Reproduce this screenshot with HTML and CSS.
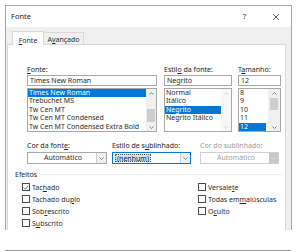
FILE: index.html
```html
<!DOCTYPE html>
<html>
<head>
    <meta charset="UTF-8">
    <title>Fonte</title>
    <link rel="stylesheet" href="styles.css">
</head>
<body>
    <div class="dialog">
        <div class="titlebar">
            <span class="title">Fonte</span>
            <span class="help">?</span>
            <svg class="close" width="8" height="8" viewBox="0 0 8 8"><path d="M1 1L7 7M7 1L1 7" stroke="#333" stroke-width="0.8"/></svg>
        </div>
        <div class="tabs">
            <div class="tab active"><u>F</u>onte</div>
            <div class="tab">A<u>v</u>ançado</div>
        </div>
        <div class="panel">
            <div class="pickers">
                <div class="picker name">
                    <div class="label"><u>F</u>onte:</div>
                    <div class="input">Times New Roman</div>
                    <div class="listbox">
                        <ul class="items">
                            <li class="selected">Times New Roman</li>
                            <li>Trebuchet MS</li>
                            <li>Tw Cen MT</li>
                            <li>Tw Cen MT Condensed</li>
                            <li>Tw Cen MT Condensed Extra Bold</li>
                        </ul>
                        <div class="scrollbar">
                            <svg width="5" height="3" viewBox="0 0 5 3"><path d="M0.5 2.5L2.5 0.5L4.5 2.5" fill="none" stroke="#555" stroke-width="0.7"/></svg>
                            <div class="thumb thumb-name"></div>
                            <svg width="5" height="3" viewBox="0 0 5 3"><path d="M0.5 0.5L2.5 2.5L4.5 0.5" fill="none" stroke="#555" stroke-width="0.7"/></svg>
                        </div>
                    </div>
                </div>
                <div class="picker style">
                    <div class="label">Estil<u>o</u> da fonte:</div>
                    <div class="input">Negrito</div>
                    <div class="listbox">
                        <ul class="items">
                            <li>Normal</li>
                            <li>Itálico</li>
                            <li class="selected">Negrito</li>
                            <li>Negrito Itálico</li>
                        </ul>
                        <div class="scrollbar off">
                            <svg width="5" height="3" viewBox="0 0 5 3"><path d="M0.5 2.5L2.5 0.5L4.5 2.5" fill="none" stroke="#c8c8c8" stroke-width="0.7"/></svg>
                            <svg width="5" height="3" viewBox="0 0 5 3"><path d="M0.5 0.5L2.5 2.5L4.5 0.5" fill="none" stroke="#c8c8c8" stroke-width="0.7"/></svg>
                        </div>
                    </div>
                </div>
                <div class="picker size">
                    <div class="label">T<u>a</u>manho:</div>
                    <div class="input">12</div>
                    <div class="listbox">
                        <ul class="items">
                            <li>8</li>
                            <li>9</li>
                            <li>10</li>
                            <li>11</li>
                            <li class="selected">12</li>
                        </ul>
                        <div class="scrollbar">
                            <svg width="5" height="3" viewBox="0 0 5 3"><path d="M0.5 2.5L2.5 0.5L4.5 2.5" fill="none" stroke="#555" stroke-width="0.7"/></svg>
                            <div class="thumb thumb-size"></div>
                            <svg width="5" height="3" viewBox="0 0 5 3"><path d="M0.5 0.5L2.5 2.5L4.5 0.5" fill="none" stroke="#555" stroke-width="0.7"/></svg>
                        </div>
                    </div>
                </div>
            </div>
            <div class="combos">
                <div class="combo-field color">
                    <div class="label">Cor da font<u>e</u>:</div>
                    <div class="combo">
                        <span class="value center">Automático</span>
                        <span class="arrow"><svg width="5" height="3" viewBox="0 0 5 3"><path d="M0.5 0.5L2.5 2.5L4.5 0.5" fill="none" stroke="#555" stroke-width="0.7"/></svg></span>
                    </div>
                </div>
                <div class="combo-field underline">
                    <div class="label">Estilo de s<u>u</u>blinhado:</div>
                    <div class="combo focus">
                        <span class="value"><span class="picked">(nenhum)</span></span>
                        <span class="arrow"><svg width="5" height="3" viewBox="0 0 5 3"><path d="M0.5 0.5L2.5 2.5L4.5 0.5" fill="none" stroke="#555" stroke-width="0.7"/></svg></span>
                    </div>
                </div>
                <div class="combo-field undercolor">
                    <div class="label off">Cor do sublinhado:</div>
                    <div class="combo off">
                        <span class="value center">Automático</span>
                        <span class="arrow"><svg width="5" height="3" viewBox="0 0 5 3"><path d="M0.5 0.5L2.5 2.5L4.5 0.5" fill="none" stroke="#e8e8e8" stroke-width="0.7"/></svg></span>
                    </div>
                </div>
            </div>
            <div class="group">
                <span>Efeitos</span>
                <span class="rule"></span>
            </div>
            <div class="effects">
                <ul class="checks first">
                    <li><span class="box checked"><svg width="7" height="7" viewBox="0 0 7 7"><path d="M1 3.6L2.8 5.4L6 1.5" fill="none" stroke="#333" stroke-width="0.8"/></svg></span>Tac<u>h</u>ado</li>
                    <li><span class="box"></span>Tachado du<u>p</u>lo</li>
                    <li><span class="box"></span>Sob<u>r</u>escrito</li>
                    <li><span class="box"></span>S<u>u</u>bscrito</li>
                </ul>
                <ul class="checks">
                    <li><span class="box"></span>Versale<u>t</u>e</li>
                    <li><span class="box"></span>Todas em <u>m</u>aiúsculas</li>
                    <li><span class="box"></span>O<u>c</u>ulto</li>
                </ul>
            </div>
        </div>
    </div>
    <div class="edge"></div>
</body>
</html>
```
FILE: styles.css
```css
* {
    box-sizing: border-box;
}
body, div, ul, li {
    margin: 0;
    padding: 0;
}
ul {
    list-style: none;
}
body {
    width: 298px;
    height: 252px;
    background-color: #ffffff;
    font-family: "Noto Sans", sans-serif;
    font-size: 7px;
    line-height: 9px;
    color: #2b2b2b;
    overflow: hidden;
}
u {
    text-decoration-thickness: 0.6px;
    text-underline-offset: 1px;
}
.dialog {
    margin: 5px 0 0 5px;
    width: 287px;
    height: 225px;
    border: 1px solid #a6a6a6;
    border-bottom: none;
    background-color: #f0f0f0;
    overflow: hidden;
}
.titlebar {
    display: flex;
    align-items: center;
    height: 21px;
    padding-left: 5px;
    background-color: #ffffff;
}
.title {
    flex: 1;
    font-size: 7.5px;
    color: #1a1a1a;
}
.help {
    width: 8px;
    margin-right: 21px;
    font-size: 7px;
}
.close {
    margin-right: 11px;
}
.tabs {
    display: flex;
    align-items: flex-end;
    height: 17px;
    padding-left: 6px;
}
.tab {
    width: 40px;
    height: 12px;
    padding-top: 2px;
    text-align: center;
    border: 1px solid #d9d9d9;
    border-bottom: none;
    border-left: none;
}
.tab.active {
    width: 32px;
    height: 14px;
    padding-top: 4px;
    border-left: 1px solid #d9d9d9;
    background-color: #ffffff;
    margin-bottom: -1px;
    position: relative;
}
.panel {
    margin-left: 1px;
    width: 279px;
    height: 200px;
    padding: 20px 0 0 7px;
    border: 1px solid #d9d9d9;
    background-color: #ffffff;
}
.pickers {
    display: flex;
    padding-left: 12px;
}
.picker.name {
    width: 130px;
}
.picker.style {
    width: 68px;
    margin-left: 7px;
}
.picker.size {
    width: 43px;
    margin-left: 6px;
}
.label {
    height: 10px;
    color: #222222;
    white-space: nowrap;
}
.label.off {
    color: #9a9a9a;
}
.input {
    height: 11px;
    padding-left: 2px;
    line-height: 9px;
    border: 1px solid #a8a8a8;
}
.listbox {
    display: flex;
    height: 44px;
    margin-top: 2px;
    border: 1px solid #a8a8a8;
}
.items {
    flex: 1;
    white-space: nowrap;
    overflow: hidden;
}
.items li {
    height: 8.4px;
    line-height: 8.4px;
    padding-left: 1px;
}
.items li.selected {
    background-color: #0078d7;
    color: #ffffff;
}
.scrollbar {
    display: flex;
    flex-direction: column;
    align-items: center;
    justify-content: space-between;
    width: 10px;
    padding: 3px 0 2px;
    background-color: #f0f0f0;
}
.scrollbar.off {
    background-color: #f7f7f7;
}
.thumb {
    width: 8px;
    background-color: #cdcdcd;
}
.thumb-name {
    height: 13px;
    margin-top: 14px;
    margin-bottom: auto;
}
.thumb-size {
    height: 12px;
    margin-top: 3px;
    margin-bottom: auto;
}
.picker.size .scrollbar {
    width: 12px;
}
.picker.size .items li.selected {
    margin-right: 2px;
}
.combos {
    display: flex;
    margin-top: 9px;
    padding-left: 12px;
}
.combo-field.color {
    width: 80px;
}
.combo-field.underline {
    width: 79px;
    margin-left: 5px;
}
.combo-field.undercolor {
    width: 79px;
    margin-left: 9px;
}
.combo-field .label {
    height: 10px;
}
.combo {
    display: flex;
    height: 12px;
    margin-top: 1px;
    border: 1px solid #a8a8a8;
}
.combo.focus {
    border-color: #0078d7;
}
.combo.off {
    border-color: #d0d0d0;
    color: #a0a0a0;
}
.value {
    flex: 1;
    padding-left: 2px;
    line-height: 10px;
}
.value.center {
    text-align: center;
}
.picked {
    display: inline-block;
    height: 8px;
    line-height: 7px;
    margin-top: 1px;
    padding: 0 1px;
    border: 1px dotted #555555;
    background-color: #cce4f7;
    color: #1a1a1a;
}
.arrow {
    display: flex;
    align-items: center;
    justify-content: center;
    width: 10px;
    border-left: 1px solid #d0d0d0;
    background-color: #f0f0f0;
}
.combo.off .arrow {
    width: 9px;
    border-left: none;
    background-color: #c8c8c8;
}
.group {
    display: flex;
    align-items: center;
    height: 9px;
    margin-top: 6px;
    color: #222222;
}
.rule {
    flex: 1;
    height: 1px;
    margin: 0 3px 0 4px;
    background-color: #ececec;
}
.effects {
    display: flex;
    margin-top: 2px;
    padding-left: 7px;
}
.checks.first {
    width: 176px;
}
.checks li {
    display: flex;
    align-items: center;
    height: 12px;
    white-space: nowrap;
}
.box {
    display: flex;
    align-items: center;
    justify-content: center;
    width: 8px;
    height: 8px;
    margin-right: 2px;
    border: 1px solid #4a4a4a;
    background-color: #ffffff;
}
.edge {
    margin: 20px 0 0 5px;
    width: 286px;
    height: 1px;
    background-color: #9c9c9c;
}
```
